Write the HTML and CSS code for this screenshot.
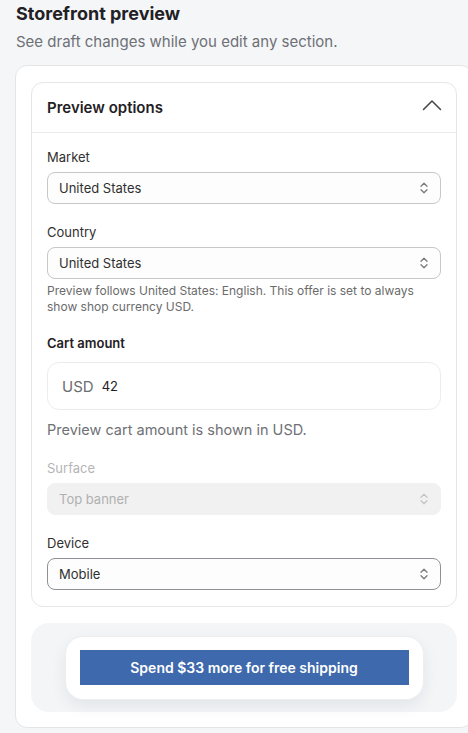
FILE: index.html
```html
<!DOCTYPE html>
<html lang="en">
<head>
<meta charset="utf-8">
<title>Storefront preview</title>
<link rel="stylesheet" href="styles.css">
</head>
<body>
<header class="page-head">
  <h1 class="page-title">Storefront preview</h1>
  <p class="page-sub">See draft changes while you edit any section.</p>
</header>
<section class="outer-card">
  <div class="options-card">
    <div class="options-head">
      <h2 class="options-title">Preview options</h2>
      <svg class="collapse-icon" width="20" height="12" viewBox="0 0 20 12" aria-hidden="true">
        <path d="M1.5 10.5 L10 2 L18.5 10.5" fill="none" stroke="#4a4a4a" stroke-width="1.6" stroke-linecap="round" stroke-linejoin="round"/>
      </svg>
    </div>
    <div class="options-body">
      <div class="field">
        <label class="label">Market</label>
        <div class="select">
          <span class="select-value">United States</span>
          <svg class="updown" width="8" height="12" viewBox="0 0 8 12" aria-hidden="true"><path d="M1 4.2 L4 1.2 L7 4.2 M1 7.8 L4 10.8 L7 7.8" fill="none" stroke="#7a7a7a" stroke-width="1.3" stroke-linecap="round" stroke-linejoin="round"/></svg>
        </div>
      </div>
      <div class="field">
        <label class="label">Country</label>
        <div class="select">
          <span class="select-value">United States</span>
          <svg class="updown" width="8" height="12" viewBox="0 0 8 12" aria-hidden="true"><path d="M1 4.2 L4 1.2 L7 4.2 M1 7.8 L4 10.8 L7 7.8" fill="none" stroke="#7a7a7a" stroke-width="1.3" stroke-linecap="round" stroke-linejoin="round"/></svg>
        </div>
        <p class="help">Preview follows United States: English. This offer is set to always show shop currency USD.</p>
      </div>
      <div class="field">
        <label class="label label-strong">Cart amount</label>
        <div class="amount-input">
          <span class="currency">USD</span>
          <span class="amount">42</span>
        </div>
        <p class="help-lg">Preview cart amount is shown in USD.</p>
      </div>
      <div class="field">
        <label class="label label-disabled">Surface</label>
        <div class="select select-disabled">
          <span class="select-value">Top banner</span>
          <svg class="updown" width="8" height="12" viewBox="0 0 8 12" aria-hidden="true"><path d="M1 4.2 L4 1.2 L7 4.2 M1 7.8 L4 10.8 L7 7.8" fill="none" stroke="#c4c4c4" stroke-width="1.3" stroke-linecap="round" stroke-linejoin="round"/></svg>
        </div>
      </div>
      <div class="field">
        <label class="label">Device</label>
        <div class="select select-active">
          <span class="select-value">Mobile</span>
          <svg class="updown" width="8" height="12" viewBox="0 0 8 12" aria-hidden="true"><path d="M1 4.2 L4 1.2 L7 4.2 M1 7.8 L4 10.8 L7 7.8" fill="none" stroke="#7a7a7a" stroke-width="1.3" stroke-linecap="round" stroke-linejoin="round"/></svg>
        </div>
      </div>
    </div>
  </div>
  <div class="preview-stage">
    <div class="preview-device">
      <div class="banner">Spend $33 more for free shipping</div>
    </div>
  </div>
</section>
</body>
</html>
```

FILE: styles.css
```css
* { box-sizing: border-box; }
html, body { margin: 0; padding: 0; }
body {
  background: #f5f6f8;
  font-family: Inter, "Noto Sans", "Liberation Sans", sans-serif;
  color: #303030;
  overflow: hidden;
  width: 468px;
  height: 733px;
}
.page-head {
  padding: 2px 16px 0 16px;
}
.page-title {
  margin: 0;
  font-size: 18px;
  line-height: 24px;
  font-weight: 700;
  color: #1f2124;
}
.page-sub {
  margin: 6px 0 0 0;
  font-size: 15px;
  line-height: 20px;
  color: #6d7075;
}
.outer-card {
  margin: 13px 0 0 15px;
  width: 458px;
  background: #fff;
  border: 1px solid #e4e5e7;
  border-radius: 12px;
  padding: 16px 15px 15px 15px;
  display: flex;
  flex-direction: column;
  gap: 16px;
}
.options-card {
  border: 1px solid #e6e6e6;
  border-radius: 12px;
  background: #fff;
}
.options-head {
  height: 50px;
  display: flex;
  align-items: center;
  justify-content: space-between;
  padding: 0 14px 0 15px;
  border-bottom: 1px solid #ebebeb;
}
.options-title {
  margin: 0;
  font-size: 15px;
  font-weight: 600;
  color: #1f2124;
}
.collapse-icon { margin-top: -6px; }
.options-body {
  padding: 14px 15px 16px 15px;
  display: flex;
  flex-direction: column;
  gap: 18px;
}
.field { display: flex; flex-direction: column; }
.label {
  font-size: 13px;
  line-height: 20px;
  margin-bottom: 5px;
  color: #303030;
}
.label-strong { font-weight: 600; margin-bottom: 9px; color: #1f2124; }
.label-disabled { color: #b5b5b5; }
.select {
  height: 32px;
  border: 1px solid #c5c7ca;
  border-radius: 8px;
  background: #fdfdfd;
  display: flex;
  align-items: center;
  justify-content: space-between;
  padding: 0 12px 0 11px;
  font-size: 13px;
  color: #303030;
}
.select-active { border-color: #8f9196; }
.select-disabled {
  background: #f1f1f1;
  border-color: #f1f1f1;
  color: #b0b0b0;
}
.help {
  margin: 4px 0 0 0;
  font-size: 12px;
  line-height: 16px;
  color: #6b6b6b;
}
.amount-input {
  height: 48px;
  border: 1px solid #ececec;
  border-radius: 12px;
  display: flex;
  align-items: center;
  padding: 0 14px;
  gap: 8px;
}
.currency { font-size: 15px; color: #6b6d70; }
.amount { font-size: 13px; color: #222; }
.help-lg {
  margin: 10px 0 0 0;
  font-size: 14.5px;
  line-height: 20px;
  color: #6f7175;
}
.preview-stage {
  background: #f3f5f7;
  border-radius: 18px;
  padding: 13px 0 12px 0;
  display: flex;
  justify-content: center;
}
.preview-device {
  width: 359px;
  background: #fff;
  border: 1px solid #eceef0;
  border-radius: 18px;
  padding: 13px 14px 14px 14px;
  box-shadow: 0 6px 16px rgba(20, 30, 50, 0.07);
}
.banner {
  height: 35px;
  background: #3e69ac;
  color: #fff;
  font-size: 14px;
  font-weight: 600;
  display: flex;
  align-items: center;
  justify-content: center;
}
```
